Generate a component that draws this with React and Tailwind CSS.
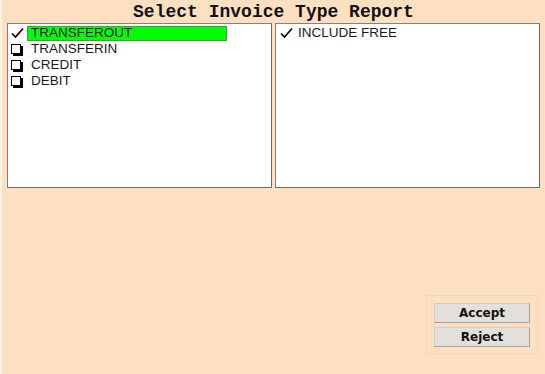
import React from 'react';

const leftItems = [
    { label: 'TRANSFEROUT', checked: true, selected: true },
    { label: 'TRANSFERIN', checked: false },
    { label: 'CREDIT', checked: false },
    { label: 'DEBIT', checked: false },
];

const Check = () => (
    <svg width="13" height="12" viewBox="0 0 13 12" className="block">
        <path d="M1 6.5 L4.5 10 L12 1.5" fill="none" stroke="#000" strokeWidth="1.6" />
    </svg>
);

const Box = () => (
    <div className="w-[10px] h-[10px] border border-black bg-white shadow-[2px_2px_0_#000]" />
);

const Row = ({ item }) => (
    <div className="flex items-center h-[16px]">
        <div className="w-[17px] flex justify-start pl-[1px]">
            {item.checked ? <Check /> : <Box />}
        </div>
        <div
            className={`h-[15px] flex items-center pl-[3px] w-[200px] ${item.selected ? 'bg-[#00ff00] border border-[#40a040]' : 'border border-transparent'}`}
        >
            {item.label}
        </div>
    </div>
);

const App = () => {
    return (
        <div
            className="w-[545px] h-[374px] bg-[#fde0c1] border-l-[2px] border-[#fff3e6] flex flex-col text-[13.5px] text-[#1a1a1a]"
            style={{ fontFamily: '"Liberation Sans", Arial, sans-serif' }}
        >
            {/* Title */}
            <div className="h-[23px] flex items-center justify-center font-bold text-[18px] text-[#111] leading-none" style={{ fontFamily: '"Liberation Mono", monospace' }}>
                Select Invoice Type Report
            </div>

            {/* Lists */}
            <div className="flex gap-[3px] pl-[5px]">
                <div className="w-[265px] h-[165px] bg-white border border-[#8a8078] border-r-[#6f6a66] border-b-[#6f6a66] pt-[1px] pl-[2px]">
                    {leftItems.map((item) => (
                        <Row key={item.label} item={item} />
                    ))}
                </div>
                <div className="w-[265px] h-[165px] bg-white border border-[#8a8078] border-r-[#6f6a66] border-b-[#6f6a66] pt-[1px] pl-[3px]">
                    <div className="flex items-center h-[16px]">
                        <div className="w-[17px] flex justify-start pl-[1px]">
                            <Check />
                        </div>
                        <div className="pl-[2px]">INCLUDE FREE</div>
                    </div>
                </div>
            </div>

            {/* Buttons */}
            <div className="flex-1 flex justify-end items-start pt-[107px] pr-[7px]">
                <div className="w-[112px] h-[59px] border border-[#f5d7b8] bg-[#fde0c1] flex flex-col items-start gap-[4px] pt-[7px] pl-[7px]">
                    {['Accept', 'Reject'].map((label) => (
                        <button
                            key={label}
                            className="w-[96px] h-[20px] bg-[#e3e0dc] border border-[#a8a29c] border-t-[#d0ccc8] border-l-[#d0ccc8] font-bold text-[12px] text-[#111] flex items-center justify-center"
                            style={{ fontFamily: '"DejaVu Sans", Verdana, sans-serif' }}
                        >
                            {label}
                        </button>
                    ))}
                </div>
            </div>
        </div>
    );
};

export default App;
